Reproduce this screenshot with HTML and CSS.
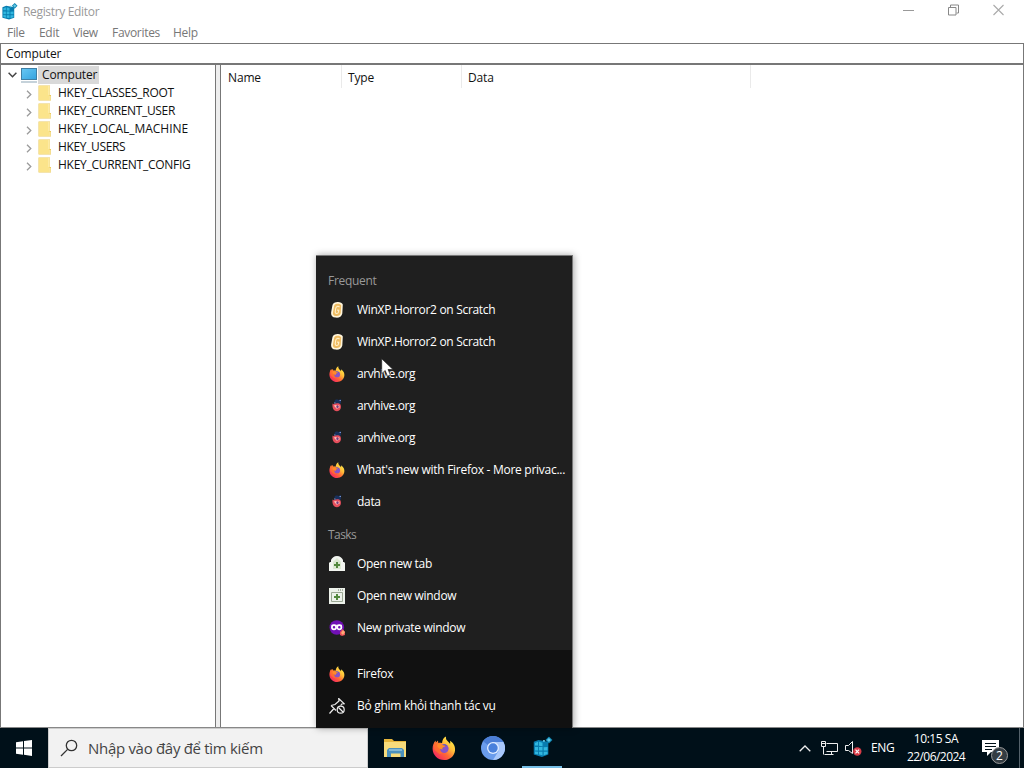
FILE: index.html
```html
<!DOCTYPE html>
<html lang="vi">
<head>
<meta charset="utf-8">
<title>Registry Editor</title>
<link rel="stylesheet" href="styles.css">
</head>
<body>
<svg class="defs" aria-hidden="true">
  <defs>
    <linearGradient id="flame" x1="0.9" y1="0.1" x2="0.2" y2="0.9"><stop offset="0" stop-color="#fff04a"/><stop offset=".35" stop-color="#ffc03a"/><stop offset=".65" stop-color="#ff6a35"/><stop offset="1" stop-color="#f62c5c"/></linearGradient>
    <linearGradient id="screen" x1="0" y1="0" x2="1" y2="1"><stop offset="0" stop-color="#66c6f2"/><stop offset="1" stop-color="#36a4e0"/></linearGradient>
    <symbol id="firefox" viewBox="0 0 24 24">
      <path fill="url(#flame)" d="M14 .5c-.5 2.600.8 4 2.500 5.500 1 .9 1.500 2 1.500 2s.5-1.500 0-3.300c4 2.500 5.500 6.300 5 10C22.300 20.300 17.700 24 12.200 24 5.800 24 .6 19 .6 12.700.6 9.500 1.700 6.500 3.500 4.500l.3 2.200L6 4.600l.2 2.500C7.500 6.700 9 6.800 10 7.200 10.300 4 11.500 1.700 14 .5Z"/>
      <path fill="#ff702f" opacity=".75" d="M3.500 5l.3 2L6 5l.2 2.300c2-.4 3.800.2 5.300 1.700l-2 5 2 3-4 1-5-4C1.400 10 2 7 3.500 5Z"/>
      <circle cx="12.300" cy="12.600" r="4.300" fill="#8754c9"/>
      <path fill="#5b55c7" d="M8.500 10.500c1-2.500 5-3.400 7-.7l-3 .2-2 3Z"/>
      <path fill="#ff8a2a" d="M5.500 8.300c2-.7 4.200-.4 5.500 1 .7.200 1.800.2 2.500.2-.3 1.200-1.700 1.600-2.500 2-.8.500-.7 1.500-.2 2-1.500 0-3.500-.5-4.600-1.700C5 10.500 5 9.200 5.500 8.300Z"/>
    </symbol>
    <symbol id="old-fox" viewBox="0 0 16 16">
      <path fill="#18305c" d="M5.500 3.500c0-2 2.500-2.500 4-1.500L12 1v4l-1 1H6Z"/>
      <path fill="#e64e5c" d="M3.600 5.500l1.200.8C7 5 10 5 11.500 6.500c1.200 3 0 6.500-3.600 6.700C4.300 13.200 2.900 9 3.600 5.500Z"/>
      <path fill="#ffc0b8" d="M4.800 7.500l2.300-.5 1.100 1 2-1 .5 2.500-3 1.300Z"/>
      <circle cx="8.500" cy="8.800" r="1.200" fill="#743a80"/>
      <path fill="#7890c4" d="M10.500 2h1.500v1h-1.500ZM5 4.500h1.500v1H5Z"/>
    </symbol>
    <symbol id="scratch" viewBox="0 0 16 16">
      <path fill="#fff5db" d="M6 .5C8.500-.6 13 .1 13.800 2.500l-.5 9C12.800 14.700 9.800 16 6.500 15.600 3 15.200 1.700 13 2.200 10L3.300 4C3.500 2.300 4.500 1 6 .5Z"/>
      <path fill="#efbc62" d="M7 2c2-.7 4.700 0 5.200 1.300L11.700 11c-.3 2.200-2.300 3.200-4.700 3-2.500-.2-3.500-1.500-3-3.800L5 4.500C5.200 3.200 6 2.300 7 2Z"/>
      <path fill="none" stroke="#fff1cc" stroke-width="1.100" d="M10.500 5C9 3.600 7 4.500 6.700 6.500L6.200 10c0 2 2.800 2 3.300.2l.3-2-1.700-.1"/>
    </symbol>
    <symbol id="folder" viewBox="0 0 14 16">
      <path fill="#e9c95f" d="M.5.500h11.500V10h1v5.500H.5Z"/><path fill="#fbe48b" d="M1 1h10.500v14H1Z"/><path fill="#fff2bd" d="M10.500 1h1v9h-1zM11.500 11h1v4h-1z"/>
    </symbol>
    <symbol id="registry" viewBox="0 0 18 18">
      <path fill="#087caf" d="M1.500 4.500l4-1.500 8.500 1.500v11L8.500 17.500l-7-2Z"/>
      <path fill="#31b7df" d="M2.500 5.500l2.700-.9v3.200H2.500ZM6 4.600l3 .7v3L6 8ZM2.500 9h2.700v3H2.500ZM6 9h3v3H6ZM10 9.200l3.300-.3v3H10ZM2.500 12.800l2.700.2v2.500l-2.700-.8ZM6 13h3v3l-3-.5ZM10 13h3.300v2L10 16Z"/>
      <path fill="#1087b4" d="M14.500 0L17.500 3l-3 3-3-3Z"/><path fill="#65c9e5" d="M14.500 1.300L16.200 3l-1.700 1.700L12.800 3ZM9.500 3h1.500v1.500H9.500Z"/>
    </symbol>
    <symbol id="chevron" viewBox="0 0 6 9"><path fill="none" stroke="#9b9b9b" stroke-width="1.300" d="M1 .7L4.800 4.500 1 8.300"/></symbol>
  </defs>
</svg>

<main class="desktop">
  <section class="window">
    <header class="titlebar">
      <svg class="app-icon"><use href="#registry"/></svg>
      <h1 class="title">Registry Editor</h1>
      <div class="controls">
        <svg width="11" height="12" viewBox="0 0 11 12"><path stroke="#999" d="M0 6.500h11"/></svg>
        <svg width="11" height="12" viewBox="0 0 11 12"><path fill="none" stroke="#888" d="M.5 3.500h7.500v7.500H.5ZM2.500 3V1H10.500V9H8.500"/></svg>
        <svg width="11" height="12" viewBox="0 0 11 12"><path stroke="#aaa" stroke-width="1.100" d="M.5 1l10 10M10.500 1l-10 10"/></svg>
      </div>
    </header>
    <nav class="menubar"><span class="m-file">File</span><span class="m-edit">Edit</span><span class="m-view">View</span><span class="m-fav">Favorites</span><span>Help</span></nav>
    <div class="address"><span>Computer</span></div>
    <div class="panes">
      <aside class="tree">
        <div class="root">
          <svg class="expand" viewBox="0 0 9 6"><path fill="none" stroke="#444" stroke-width="1.500" d="M.6.8L4.500 4.700 8.400.8"/></svg>
          <svg class="monitor" viewBox="0 0 18 16"><path fill="#3f7fa5" d="M1 1h16v12H1Z"/><path fill="url(#screen)" d="M2 2h14v10H2Z"/><path stroke="#8ba5b5" d="M1 15h16"/></svg>
          <span class="selected">Computer</span>
        </div>
        <div class="key"><svg class="chev"><use href="#chevron"/></svg><svg class="folder"><use href="#folder"/></svg><span class="k1">HKEY_CLASSES_ROOT</span></div>
        <div class="key"><svg class="chev"><use href="#chevron"/></svg><svg class="folder"><use href="#folder"/></svg><span class="k2">HKEY_CURRENT_USER</span></div>
        <div class="key"><svg class="chev"><use href="#chevron"/></svg><svg class="folder"><use href="#folder"/></svg><span class="k3">HKEY_LOCAL_MACHINE</span></div>
        <div class="key"><svg class="chev"><use href="#chevron"/></svg><svg class="folder"><use href="#folder"/></svg><span class="k4">HKEY_USERS</span></div>
        <div class="key"><svg class="chev"><use href="#chevron"/></svg><svg class="folder"><use href="#folder"/></svg><span class="k5">HKEY_CURRENT_CONFIG</span></div>
      </aside>
      <div class="splitter"></div>
      <section class="values"><div class="columns"><span>Name</span><span>Type</span><span>Data</span></div></section>
    </div>
  </section>

  <section class="jumplist">
    <div class="jump-main">
      <h2>Frequent</h2>
      <div class="item"><svg><use href="#scratch"/></svg><span>WinXP.Horror2 on Scratch</span></div>
      <div class="item"><svg><use href="#scratch"/></svg><span>WinXP.Horror2 on Scratch</span></div>
      <div class="item"><svg><use href="#firefox"/></svg><span class="site">arvhive.org</span></div>
      <div class="item"><svg><use href="#old-fox"/></svg><span class="site">arvhive.org</span></div>
      <div class="item"><svg><use href="#old-fox"/></svg><span class="site">arvhive.org</span></div>
      <div class="item"><svg><use href="#firefox"/></svg><span class="news">What's new with Firefox - More privac...</span></div>
      <div class="item"><svg><use href="#old-fox"/></svg><span>data</span></div>
      <h2 class="tasks">Tasks</h2>
      <div class="item"><svg viewBox="0 0 16 16"><path fill="#f2f5f0" d="M0 15V7l1-1h1V4c1-2 3-4 6-4s5 2 6 4v2h1l1 1v8Z"/><path fill="#dce9d2" d="M4 6l4-4 4 4v7H4Z"/><path stroke="#53893f" stroke-width="2" d="M8 6v6M5 9h6"/></svg><span>Open new tab</span></div>
      <div class="item"><svg viewBox="0 0 16 16"><path fill="#edf2eb" d="M0 0h16v16H0Z"/><path fill="none" stroke="#9aa793" d="M2.500 4.500h11v9h-11Z"/><path fill="#68775f" d="M9 1.500h1v1H9ZM11 1.500h1v1h-1ZM13 1.500h1v1h-1Z"/><path stroke="#53893f" stroke-width="2" d="M8 6v6M5 9h6"/></svg><span>Open new window</span></div>
      <div class="item"><svg viewBox="0 0 16 16"><circle cx="7.800" cy="7.500" r="7.300" fill="#7010b5"/><g fill="none" stroke="#fff" stroke-width="1.700"><circle cx="5" cy="7.200" r="2.100"/><circle cx="10.300" cy="7.200" r="2.100"/></g><path stroke="#fff" d="M2.500 5.300h10.500"/><path fill="#e9525b" d="M11 12l2.500-3 2.500 3v3l-3 1-2-1Z"/><path fill="#ffab75" d="M12 13l2-3 2 2-2 3Z"/></svg><span>New private window</span></div>
    </div>
    <div class="jump-app">
      <div class="item"><svg><use href="#firefox"/></svg><span>Firefox</span></div>
      <div class="item"><svg viewBox="0 0 16 16"><g fill="none" stroke="#eee" stroke-width="1.200"><path d="M.5 15.500L5 10.500M2 7.500l3.500 3.500 1.500 1.500M2 7.500l4-1 4-3.500-.3-2.500 5.600 5.300-2.600.2-1 1.500"/><circle cx="11.700" cy="11.700" r="3.500"/><path d="M9.500 9.500l4.500 4.500"/></g></svg><span class="unpin">Bỏ ghim khỏi thanh tác vụ</span></div>
    </div>
  </section>
  <svg class="pointer" viewBox="0 0 13 19"><path fill="#fff" stroke="#222" stroke-width=".7" d="M.7.7v15l3.500-3.200 2.300 5.800 2.900-1.200L7 11.500h5Z"/></svg>

  <footer class="taskbar">
    <div class="start"><svg width="16" height="16" viewBox="0 0 16 16"><path fill="#fff" d="M0 2.300L7 1.300v6.300H0ZM8 1.100L16 0v7.600H8ZM0 8.500h7v6.300l-7-1ZM8 8.500h8V16l-8-1.200Z"/></svg></div>
    <div class="search"><svg width="18" height="18" viewBox="0 0 18 18"><g fill="none" stroke="#333" stroke-width="1.300"><circle cx="11.500" cy="6.500" r="5.200"/><path d="M7.600 10.400L1 17"/></g></svg><span>Nhập vào đây để tìm kiếm</span></div>
    <div class="apps">
      <div class="app"><svg width="23" height="20" viewBox="0 0 23 20"><path fill="#e6b63c" d="M0 1h8l2 2h12v16H0Z"/><path fill="#f8dc7b" d="M0 4h22v15H0Z"/><path fill="#4b91bd" d="M3 12l2-2h13l2 2v7h-3.500v-3.500H7V19H3Z"/><path fill="#83b8d4" d="M5 11h13v2H5Z"/></svg></div>
      <div class="app"><svg width="24" height="24"><use href="#firefox"/></svg></div>
      <div class="app"><svg width="24" height="24" viewBox="0 0 24 24"><circle cx="12" cy="12" r="12" fill="#6a9cec"/><path fill="#a9c8fb" d="M12 6h10.400A12 12 0 0 1 12 24l5.500-9Z"/><path fill="#4b7ed6" d="M2 5.300A12 12 0 0 1 22.400 6H12L7 9Z"/><circle cx="12" cy="12" r="6" fill="#e0ecff"/><circle cx="12" cy="12" r="4.700" fill="#4a81dc"/></svg></div>
      <div class="app active"><svg width="21" height="22" viewBox="0 0 18 18"><use href="#registry"/></svg></div>
    </div>
    <div class="tray">
      <svg class="up" viewBox="0 0 12 7"><path fill="none" stroke="#eee" stroke-width="1.300" d="M.7 6.300L6 1l5.300 5.300"/></svg>
      <svg class="network" viewBox="0 0 17 15"><g fill="none" stroke="#eee"><path d="M5.500 2.500h11v8h-11M3.500 13.500h9M10.500 10.500v3M2.500 5.500v8"/><path d="M.5.500h4v5h-4ZM1 2.500h3"/></g></svg>
      <svg class="sound" viewBox="0 0 17 15"><path fill="none" stroke="#eee" d="M.5 4.500h3l4-4v12l-4-3h-3Z"/><circle cx="12.300" cy="10.500" r="4.200" fill="#d93b47"/><path stroke="#fff" stroke-width="1.200" d="M10.500 8.700l3.600 3.600M14.100 8.700l-3.600 3.600"/></svg>
      <span class="language">ENG</span>
      <div class="clock"><span class="time">10:15 SA</span><span class="date">22/06/2024</span></div>
      <div class="notifications"><svg width="17" height="16" viewBox="0 0 17 16"><path fill="#fff" d="M0 0h17v12H9l-4 4v-4H0Z"/><path stroke="#001018" d="M3 3.500h11M3 6.500h11M3 9.500h7"/></svg><span class="count">2</span></div>
      <div class="show-desktop"></div>
    </div>
  </footer>
</main>
</body>
</html>
```

FILE: styles.css
```css
* { box-sizing: border-box; }
body { margin: 0; font-family: "Open Sans", "Noto Sans", sans-serif; font-size: 12px; line-height: 16px; color: #111; }
svg { display: block; flex: none; }
span { white-space: nowrap; }
.defs { position: absolute; width: 0; height: 0; }
.desktop { position: relative; width: 1024px; height: 768px; overflow: hidden; background: #fff; display: flex; flex-direction: column; }
.window { height: 728px; display: flex; flex-direction: column; border-bottom: 1px solid #888; }
.titlebar { height: 24px; display: flex; align-items: center; padding-left: 1px; }
.app-icon { width: 17px; height: 17px; margin-bottom: 1px; }
.title { margin: 0 0 0 5px; font-size: 12px; font-weight: 400; color: #999; letter-spacing: -.33px; }
.controls { margin-left: auto; margin-right: 20px; padding-bottom: 4px; display: flex; gap: 34px; }
.menubar { height: 19px; padding: 1px 7px; display: flex; color: #777; letter-spacing: -.3px; }
.m-file { width: 32px; }
.m-edit { width: 34px; }
.m-view { width: 39px; letter-spacing: -.4px; }
.m-fav { width: 61px; }
.address { height: 20px; padding: 2px 5px; border: 1px solid #777; border-bottom: 0; letter-spacing: -.15px; }
.panes { display: flex; flex: 1; border-top: 2px solid #777; }
.tree { width: 216px; border: solid #777; border-width: 0 1px; padding-top: 1px; }
.splitter { width: 4px; background: #eee; }
.values { flex: 1; border: solid #777; border-width: 0 1px; }
.root { height: 18px; display: flex; align-items: center; padding-left: 7px; }
.expand { width: 9px; height: 6px; }
.monitor { width: 18px; height: 16px; margin-left: 3px; }
.selected { background: #d9d9d9; padding: 0 2px 0 4px; height: 18px; line-height: 18px; letter-spacing: -.15px; }
.key { height: 18px; display: flex; align-items: center; padding-left: 25px; }
.chev { width: 6px; height: 9px; margin-top: 2px; }
.folder { width: 14px; height: 16px; margin-left: 6px; }
.key span { margin-left: 6px; }
.k1, .k5 { letter-spacing: -.28px; }
.k2, .k4 { letter-spacing: -.35px; }
.k3 { letter-spacing: -.05px; }
.columns { height: 23px; width: 530px; display: flex; border-right: 1px solid #eaeaea; letter-spacing: -.15px; }
.columns span { width: 120px; padding: 5px 6px 2px 7px; border-right: 1px solid #eaeaea; }
.columns span:first-child { width: 121px; }
.columns span:nth-child(2) { padding-left: 6px; }
.columns span:last-child { border: 0; padding-left: 6px; }
.jumplist { position: absolute; left: 316px; top: 255px; width: 257px; height: 473px; display: flex; flex-direction: column; color: #fff; border: solid #777; border-width: 1px 1px 0 0; background: #1f1f1f; box-shadow: 1px 0 7px rgb(0 0 0 / 35%); letter-spacing: -.31px; }
.jump-main { height: 394px; padding-top: 17px; }
.jumplist h2 { margin: 0 0 5px 12px; height: 16px; line-height: 16px; font-size: 12px; font-weight: 400; color: #999; }
.jumplist h2.tasks { margin-top: 9px; margin-bottom: 5px; letter-spacing: -.55px; }
.item { height: 32px; display: flex; align-items: center; gap: 12px; padding-left: 13px; }
.item svg { width: 16px; height: 16px; }
.site { letter-spacing: -.4px; }
.news { letter-spacing: -.27px; }
.unpin { letter-spacing: -.28px; }
.jump-app { flex: 1; background: #111; padding-top: 8px; }
.pointer { position: absolute; left: 381px; top: 358px; width: 13px; height: 19px; }
.taskbar { height: 40px; display: flex; background: #001019; color: #fff; }
.start { width: 48px; display: grid; place-items: center; }
.search { width: 320px; display: flex; align-items: center; padding-left: 11px; gap: 10px; background: #f2f2f2; border: 1px solid #ccc; color: #444; font-size: 15px; letter-spacing: -.3px; }
.apps { display: flex; margin-left: 2px; }
.app { width: 49px; display: grid; place-items: center; padding-left: 1px; }
.active { border-bottom: 2px solid #76bfe6; width: 40px; margin-left: 5px; }
.tray { flex: 1; display: flex; align-items: center; position: relative; }
.up { width: 12px; height: 7px; margin-left: 237px; }
.network { width: 17px; height: 15px; margin-left: 10px; }
.sound { width: 17px; height: 15px; margin-left: 7px; }
.language { margin-left: 9px; width: 25px; letter-spacing: -.4px; }
.clock { width: 64px; margin-left: 8px; display: flex; flex-direction: column; align-items: center; line-height: 18px; }
.time { letter-spacing: -.45px; }
.date { letter-spacing: -.55px; }
.notifications { width: 28px; height: 26px; margin-left: 14px; padding-top: 5px; position: relative; }
.count { position: absolute; right: 2px; bottom: -3px; width: 17px; height: 17px; border-radius: 50%; border: 1px solid #999; background: #343d43; text-align: center; line-height: 15px; }
.show-desktop { position: absolute; right: 4px; top: 0; bottom: 0; border-left: 1px solid #54616a; }
```
